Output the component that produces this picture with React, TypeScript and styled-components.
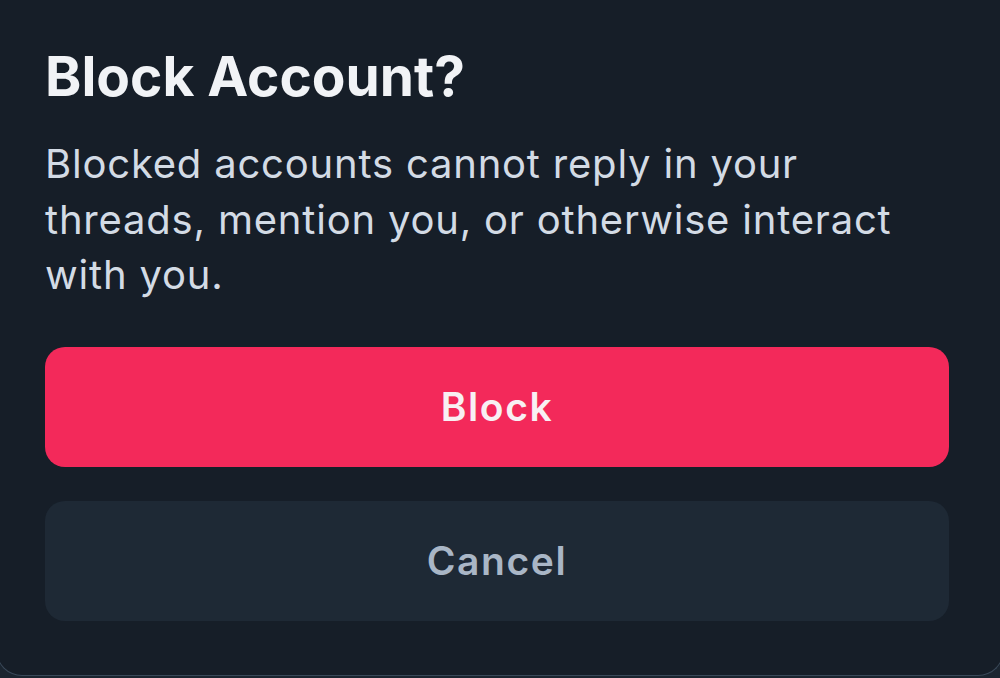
import { FunctionComponent } from "react"
import styled, { createGlobalStyle } from "styled-components"

const GlobalStyle = createGlobalStyle`
  html, body {
    margin: 0;
    padding: 0;
    background-color: #1b2530;
    overflow: hidden;
  }

  body {
    font-family: "Inter", "Liberation Sans", sans-serif;
    -webkit-font-smoothing: antialiased;
  }
`

const StyledSheet = styled.div`
  box-sizing: border-box;
  width: calc(100% + 8px);
  height: 676px;
  margin: 0 -4px;
  padding: 44px 54px 0 48px;
  display: flex;
  flex-direction: column;
  background-color: #161e28;
  border: 1.5px solid #3a4959;
  border-top: none;
  border-radius: 0 0 26px 26px;
`

const StyledTitle = styled.h1`
  margin: 0;
  font-size: 55px;
  line-height: 65px;
  font-weight: 700;
  color: #f1f3f6;
  letter-spacing: 0;
`

const StyledDescription = styled.p`
  max-width: 880px;
  margin: 27px 0 0 0;
  font-size: 40px;
  line-height: 55.5px;
  font-weight: 400;
  color: #d3dbe5;
  letter-spacing: 0.8px;
`

const StyledActions = styled.div`
  display: flex;
  flex-direction: column;
  gap: 34px;
  margin-top: 44px;
`

const StyledButton = styled.button<{ $variant: "danger" | "neutral" }>`
  box-sizing: border-box;
  width: 100%;
  height: 120px;
  border: none;
  border-radius: 20px;
  font-family: inherit;
  font-size: 39px;
  font-weight: 600;
  letter-spacing: 1.6px;
  cursor: pointer;
  background-color: ${(p) => (p.$variant === "danger" ? "#f3295a" : "#1e2935")};
  color: ${(p) => (p.$variant === "danger" ? "#f8f0f3" : "#a9b6c6")};
`

interface InterfaceConfirmSheet {
  title: string
  description: string
  confirmText: string
  cancelText: string
}

const ConfirmSheet: FunctionComponent<InterfaceConfirmSheet> = ({
  title,
  description,
  confirmText,
  cancelText,
}) => {
  return (
    <StyledSheet>
      <StyledTitle>{title}</StyledTitle>
      <StyledDescription>{description}</StyledDescription>
      <StyledActions>
        <StyledButton type="button" $variant="danger">
          {confirmText}
        </StyledButton>
        <StyledButton type="button" $variant="neutral">
          {cancelText}
        </StyledButton>
      </StyledActions>
    </StyledSheet>
  )
}

const App = () => {
  return (
    <>
      <GlobalStyle />
      <ConfirmSheet
        title="Block Account?"
        description="Blocked accounts cannot reply in your threads, mention you, or otherwise interact with you."
        confirmText="Block"
        cancelText="Cancel"
      />
    </>
  )
}

export default App
